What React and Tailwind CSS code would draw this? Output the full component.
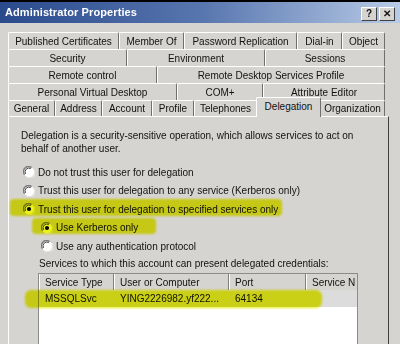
import { useState } from "react";

const tabRows = [
  [
    ["Published Certificates", 111],
    ["Member Of", 65],
    ["Password Replication", 113],
    ["Dial-in", 45],
    ["Object", 43],
  ],
  [
    ["Security", 119],
    ["Environment", 138],
    ["Sessions", 120],
  ],
  [
    ["Remote control", 149],
    ["Remote Desktop Services Profile", 228],
  ],
  [
    ["Personal Virtual Desktop", 169],
    ["COM+", 86],
    ["Attribute Editor", 122],
  ],
];

const bottomTabs = [
  ["General", 47],
  ["Address", 47],
  ["Account", 50],
  ["Profile", 42],
  ["Telephones", 63],
  ["Delegation", 63],
  ["Organization", 65],
];

function Radio({ checked }) {
  return (
    <svg width="12" height="12" viewBox="0 0 12 12" className="shrink-0">
      <circle cx="6" cy="6" r="5.2" fill="#ffffff" />
      <path d="M1.6 8.6 A5 5 0 0 1 8.6 1.6" stroke="#7a7a7a" strokeWidth="1.4" fill="none" />
      <path d="M2.6 7.8 A3.8 3.8 0 0 1 7.8 2.6" stroke="#303030" strokeWidth="0.9" fill="none" />
      <path d="M3.4 10.6 A5 5 0 0 0 10.6 3.4" stroke="#e8e8e8" strokeWidth="1.2" fill="none" />
      {checked && <circle cx="6" cy="6" r="2.1" fill="#000000" />}
    </svg>
  );
}

function Tab({ label, width }) {
  return (
    <div
      className="h-full flex items-center justify-center border-t border-l border-t-white border-l-white border-r border-r-[#6f6f6f] rounded-t-[2px] shrink-0"
      style={{ width }}
    >
      {label}
    </div>
  );
}

export default function App() {
  const [mode, setMode] = useState(2);
  const [proto, setProto] = useState(0);

  return (
    <div className="relative w-[400px] h-[344px] overflow-hidden bg-[#d6d4d0] text-[10px] text-[#111] font-['Liberation_Sans',Arial,sans-serif]">
      {/* title bar */}
      <div className="h-[23px] border-t-2 border-black bg-gradient-to-r from-[#2a4a8c] via-[#5775ae] to-[#b9cbe6] flex items-center justify-between pl-[5px] pr-[5px]">
        <span className="text-white font-bold text-[11px] tracking-[0.1px]">Administrator Properties</span>
        <div className="flex gap-[2px] mt-[2px]">
          <div className="w-[16px] h-[14px] bg-[#d6d4d0] border border-t-white border-l-white border-r-[#404040] border-b-[#404040] flex items-center justify-center font-bold text-[10px] leading-none">?</div>
          <div className="w-[16px] h-[14px] bg-[#d6d4d0] border border-t-white border-l-white border-r-[#404040] border-b-[#404040] flex items-center justify-center font-bold text-[10px] leading-none">✕</div>
        </div>
      </div>

      {/* tabs */}
      <div className="pl-[8px] pt-[9px]">
        {tabRows.map((row, i) => (
          <div key={i} className="flex h-[17px]">
            {row.map(([label, w]) => (
              <Tab key={label} label={label} width={w} />
            ))}
          </div>
        ))}
        <div className="flex h-[16px] items-end">
          {bottomTabs.map(([label, w]) =>
            label === "Delegation" ? (
              <div
                key={label}
                className="relative z-10 h-[20px] -mb-[1px] -mx-[1px] bg-[#d6d4d0] flex items-center justify-center border-t border-l border-t-white border-l-white border-r border-r-[#6f6f6f] rounded-t-[2px] shrink-0 pb-[3px]"
                style={{ width: w + 2 }}
              >
                {label}
              </div>
            ) : (
              <Tab key={label} label={label} width={w} />
            )
          )}
        </div>

        {/* panel */}
        <div className="w-[381px] h-[240px] border-t border-l border-white border-r border-r-[#404040] pl-[12px] pt-[12px]">
          <p className="leading-[13px] w-[350px]">
            Delegation is a security-sensitive operation, which allows services to act on behalf of another user.
          </p>

          <div className="mt-[11px] flex flex-col gap-[6.5px] pl-[2px]">
            {[
              "Do not trust this user for delegation",
              "Trust this user for delegation to any service (Kerberos only)",
              "Trust this user for delegation to specified services only",
            ].map((t, i) => (
              <label key={i} className="flex items-center gap-[3px] h-[12px]" onClick={() => setMode(i)}>
                <Radio checked={mode === i} />
                <span>{t}</span>
              </label>
            ))}
            <div className="pl-[18px] flex flex-col gap-[6.5px]">
              {["Use Kerberos only", "Use any authentication protocol"].map((t, i) => (
                <label key={i} className="flex items-center gap-[3px] h-[12px]" onClick={() => setProto(i)}>
                  <Radio checked={proto === i} />
                  <span>{t}</span>
                </label>
              ))}
            </div>
          </div>

          <p className="mt-[4px] pl-[18px]">Services to which this account can present delegated credentials:</p>

          <div className="ml-[17px] mt-[2px] w-[320px] h-[80px] bg-white border border-[#8c8c8c] overflow-hidden">
            <div className="flex h-[16px] bg-[#d6d4d0]">
              {[
                ["Service Type", 75],
                ["User or Computer", 115],
                ["Port", 77],
                ["Service N", 60],
              ].map(([h, w]) => (
                <div
                  key={h}
                  className="shrink-0 h-full flex items-center pl-[5px] border-r border-r-[#808080] border-l border-l-white whitespace-nowrap overflow-hidden"
                  style={{ width: w }}
                >
                  {h}
                </div>
              ))}
            </div>
            <div className="flex h-[17px] bg-[#dcdcdc] items-center">
              <div className="w-[75px] pl-[6px] shrink-0">MSSQLSvc</div>
              <div className="w-[115px] pl-[6px] shrink-0">YING2226982.yf222...</div>
              <div className="w-[77px] pl-[6px] shrink-0">64134</div>
            </div>
          </div>
        </div>
      </div>

      {/* marker highlights drawn over the screenshot */}
      <div className="absolute left-[10px] top-[199px] w-[272px] h-[17px] bg-[#e9f000] mix-blend-multiply rounded-[4px] blur-[1px] opacity-90" />
      <div className="absolute left-[32px] top-[218px] w-[124px] h-[16px] bg-[#e9f000] mix-blend-multiply rounded-[4px] blur-[1px] opacity-90" />
      <div className="absolute left-[25px] top-[290px] w-[297px] h-[18px] bg-[#e9f000] mix-blend-multiply rounded-[6px] blur-[1px] opacity-90" />
    </div>
  );
}
